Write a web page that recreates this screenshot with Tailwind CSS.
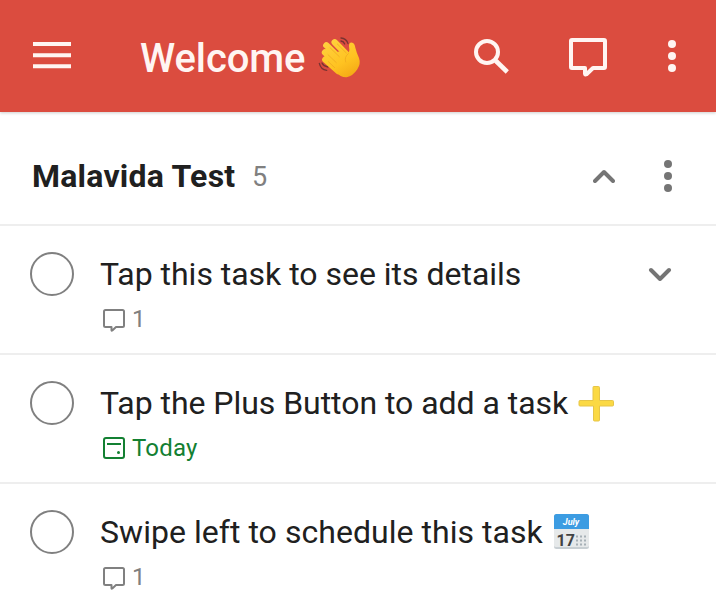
<!DOCTYPE html>
<html lang="en">
<head>
<meta charset="utf-8">
<title>Welcome</title>
<script src="https://cdn.jsdelivr.net/npm/@tailwindcss/browser@4"></script>
</head>
<body class="h-[601px] w-[716px] overflow-hidden bg-white font-['Roboto','Noto_Sans',sans-serif] text-[#202020]">
<svg class="hidden">
  <symbol id="comment" viewBox="0 0 24 25"><path d="M3.500 2H20.500A1.500 1.500 0 0 1 22 3.500V17.500A1.500 1.500 0 0 1 20.500 19H14L10.300 22.500Q9.500 23 9.500 22V19H3.500A1.500 1.500 0 0 1 2 17.500V3.500A1.500 1.500 0 0 1 3.500 2Z" fill="none" stroke="currentColor" stroke-width="2" stroke-linejoin="round"/></symbol>
</svg>
<header class="flex h-28 items-center bg-[#db4c3f] text-[#fff5f2] shadow-[0_1px_3px_rgba(0,0,0,0.2)]">
  <svg class="mb-0.5 ml-[33px] h-[27px] w-[38px] shrink-0" viewBox="0 0 38 27" fill="currentColor"><path d="M0 0h38v4H0zM0 11.300h38v4H0zM0 22.300h38v4H0z"/></svg>
  <h1 class="ml-[69px] w-[177px] pt-1.5 text-[40px] leading-[46px] font-medium tracking-[-0.100px] whitespace-nowrap">Welcome</h1>
  <svg class="mt-0.5 h-[46px] w-[44px] shrink-0" viewBox="36 24 132 138" role="img" aria-label="waving hand">
    <defs><linearGradient id="skin" gradientUnits="userSpaceOnUse" x1="70" y1="45" x2="135" y2="155"><stop offset="0" stop-color="#ffd03e"/><stop offset=".6" stop-color="#ffc321"/><stop offset="1" stop-color="#f4a915"/></linearGradient></defs>
    <g fill="none" stroke="#793331" stroke-width="4" stroke-linecap="round"><path d="M108 36Q124 37 129 53M108 45Q116 46 119 54M43 112Q47 130 65 133M51 111Q56 121 69 123"/></g>
    <g fill="none" stroke="url(#skin)" stroke-width="19" stroke-linecap="round"><path d="M89 49L130 91M64 58L112 104M60 79L102 119M61 101L100 135"/></g>
    <path d="M77 85L115 72Q125 80 131 82Q135 73 132 60Q132 48 142 50Q149 52 151 65Q155 81 162 96Q168 113 157 130Q144 150 125 154Q107 155 93 139L75 118Z" fill="url(#skin)"/>
    <path d="M75 65L103 92M69 86L94 110M70 107L89 125M97 54L124 81M130 83Q117 93 122 108" fill="none" stroke="#eda51e" stroke-width="2" stroke-linecap="round"/>
  </svg>
  <svg class="ml-[113px] h-[35px] w-[35px] shrink-0" viewBox="0 0 35 35" fill="none" stroke="currentColor"><circle cx="13" cy="13" r="11" stroke-width="4"/><path d="M21 21L23 23" stroke-width="4"/><path d="M22 22L33.300 33" stroke-width="4.600"/></svg>
  <svg class="ml-[59px] mt-[2px] h-[40px] w-[40px] shrink-0" viewBox="0 0 40 40"><path d="M4 3H36Q37 3 37 4V30Q37 31 36 31H25L18.500 37.300Q17 38 17 36.500V31H4Q3 31 3 30V4Q3 3 4 3Z" fill="none" stroke="currentColor" stroke-width="4" stroke-linejoin="round"/></svg>
  <svg class="ml-[60px] h-[32px] w-2 shrink-0" viewBox="0 0 8 32" fill="currentColor"><circle cx="4" cy="4" r="4"/><circle cx="4" cy="16" r="4"/><circle cx="4" cy="28" r="4"/></svg>
</header>
<main>
  <section class="flex h-[114px] items-center border-b-2 border-[#eee] pt-4 pb-0">
    <h2 class="ml-8 w-[220px] text-[32px] leading-10 font-bold tracking-[0.230px] whitespace-nowrap">Malavida Test</h2>
    <span class="w-[341px] pt-0.5 text-[27px] leading-10 text-[#808080]">5</span>
    <svg class="h-[14px] w-[22px] shrink-0" viewBox="0 0 22 14" fill="none" stroke="#757575" stroke-width="4" stroke-linecap="round" stroke-linejoin="round"><path d="M2 12L11 3L20 12"/></svg>
    <svg class="ml-[49px] h-8 w-2 shrink-0" viewBox="0 0 8 32" fill="#757575"><circle cx="4" cy="4" r="4"/><circle cx="4" cy="16" r="4"/><circle cx="4" cy="28" r="4"/></svg>
  </section>
  <article class="flex h-[129px] border-b-2 border-[#eee] pt-[26px]">
    <div class="ml-[30px] h-[44px] w-[44px] shrink-0 rounded-full border-2 border-[#808080]"></div>
    <div class="ml-[26px] w-[548px]">
      <h3 class="pt-0.5 text-[32px] leading-10 tracking-[-0.020px] whitespace-nowrap">Tap this task to see its details</h3>
      <div class="mt-[11px] flex h-7 items-center text-[24px] text-[#808080]"><svg class="ml-0.5 mt-0.5 h-[25px] w-6"><use href="#comment"/></svg><span class="ml-1.5">1</span></div>
    </div>
    <svg class="mt-[15px] h-[14px] w-[24px] shrink-0" viewBox="0 0 24 14" fill="none" stroke="#757575" stroke-width="4" stroke-linecap="round" stroke-linejoin="round"><path d="M3 3L12 12L21 3"/></svg>
  </article>
  <article class="flex h-[129px] border-b-2 border-[#eee] pt-[26px]">
    <div class="ml-[30px] h-[44px] w-[44px] shrink-0 rounded-full border-2 border-[#808080]"></div>
    <div class="ml-[26px] w-[580px]">
      <div class="flex"><h3 class="w-[477px] pt-0.5 text-[32px] leading-10 tracking-[-0.040px] whitespace-nowrap">Tap the Plus Button to add a task</h3>
      <svg class="mt-[3px] h-[38px] w-[38px] shrink-0" viewBox="0 0 38 38"><path d="M16.500 2.500H21.500Q22.500 2.500 22.500 3.500V16.500H35.500Q36.500 16.500 36.500 17.500V21Q36.500 22 35.500 22H22.500V36Q22.500 37 21.500 37H17.500Q16.500 37 16.500 36V22H3Q2 22 2 21V17.500Q2 16.500 3 16.500H16V3.500Q16 2.500 16.500 2.500Z" fill="#fbd944" stroke="#e6c548"/></svg></div>
      <div class="mt-[11px] flex h-7 items-center text-[24px] text-[#138032]"><svg class="ml-0.5 h-6 w-6" viewBox="0 0 24 24" fill="none" stroke="currentColor" stroke-width="2"><rect x="2" y="2" width="20" height="20" rx="2"/><path d="M5 8H19"/><circle cx="16.500" cy="16.500" r="1.500" fill="currentColor" stroke="none"/></svg><span class="ml-1.5 tracking-[0.200px]">Today</span></div>
    </div>
  </article>
  <article class="flex h-[129px] pt-[26px]">
    <div class="ml-[30px] h-[44px] w-[44px] shrink-0 rounded-full border-2 border-[#808080]"></div>
    <div class="ml-[26px] w-[580px]">
      <div class="flex"><h3 class="w-[453px] pt-0.5 text-[32px] leading-10 tracking-[0.040px] whitespace-nowrap">Swipe left to schedule this task</h3>
      <svg class="mt-1 h-[37px] w-[37px] shrink-0" viewBox="0 0 37 37" font-family="Roboto, sans-serif" font-weight="700"><rect x="1" y="0" width="35" height="35" rx="2.500" fill="#c8cfd3"/><path d="M1 15H36V32Q36 33 34 33H3Q1 33 1 32Z" fill="#e6e9ea"/><path d="M1 15V2.500Q1 0 3.500 0H33.500Q36 0 36 2.500V15Z" fill="#3c9ce2"/><text x="18" y="10.500" text-anchor="middle" font-size="9" font-style="italic" fill="#fff">July</text><text x="3.500" y="32" font-size="16" fill="#424242">17</text><path d="M23 22.500H34M23 26.500H34M23 30.500H34" stroke="#a6b0b6" stroke-width="2" stroke-dasharray="2 2"/></svg></div>
      <div class="mt-[11px] flex h-7 items-center text-[24px] text-[#808080]"><svg class="ml-0.5 mt-0.5 h-[25px] w-6"><use href="#comment"/></svg><span class="ml-1.5">1</span></div>
    </div>
  </article>
</main>
</body>
</html>
